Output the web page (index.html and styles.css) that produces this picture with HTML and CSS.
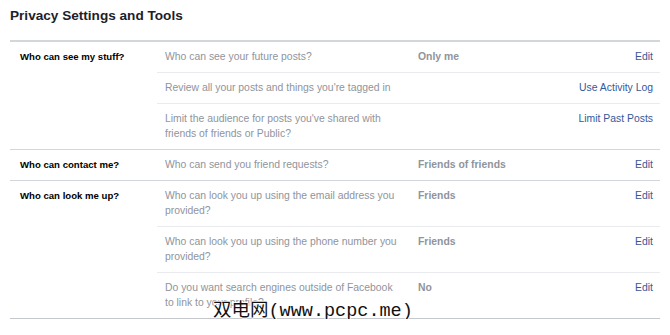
FILE: index.html
```html
<!DOCTYPE html>
<html lang="en">
<head>
    <meta charset="UTF-8">
    <meta name="viewport" content="width=device-width, initial-scale=1.0">
    <title>Privacy Settings and Tools</title>
    <link rel="stylesheet" href="styles.css">
</head>
<body>
    <div class="page">
        <h1 class="page-title">Privacy Settings and Tools</h1>
        <div class="settings">
            <div class="section first">
                <div class="section-label">Who can see my stuff?</div>
                <div class="rows">
                    <div class="row">
                        <div class="question">Who can see your future posts?</div>
                        <div class="value">Only me</div>
                        <a class="action" href="#">Edit</a>
                    </div>
                    <div class="row">
                        <div class="question">Review all your posts and things you're tagged in</div>
                        <div class="value"></div>
                        <a class="action" href="#">Use Activity Log</a>
                    </div>
                    <div class="row">
                        <div class="question">Limit the audience for posts you've shared with friends of friends or Public?</div>
                        <div class="value"></div>
                        <a class="action" href="#">Limit Past Posts</a>
                    </div>
                </div>
            </div>
            <div class="section">
                <div class="section-label">Who can contact me?</div>
                <div class="rows">
                    <div class="row">
                        <div class="question">Who can send you friend requests?</div>
                        <div class="value">Friends of friends</div>
                        <a class="action" href="#">Edit</a>
                    </div>
                </div>
            </div>
            <div class="section last">
                <div class="section-label">Who can look me up?</div>
                <div class="rows">
                    <div class="row">
                        <div class="question">Who can look you up using the email address you provided?</div>
                        <div class="value">Friends</div>
                        <a class="action" href="#">Edit</a>
                    </div>
                    <div class="row">
                        <div class="question">Who can look you up using the phone number you provided?</div>
                        <div class="value">Friends</div>
                        <a class="action" href="#">Edit</a>
                    </div>
                    <div class="row">
                        <div class="question">Do you want search engines outside of Facebook to link to your profile?</div>
                        <div class="value">No</div>
                        <a class="action" href="#">Edit</a>
                    </div>
                </div>
            </div>
        </div>
        <div class="watermark">双电网(www.pcpc.me)</div>
    </div>
</body>
</html>
```

FILE: styles.css
```css
:root {
    --text-dark: #1d2129;
    --text-grey: #90949c;
    --link: #365899;
    --line-strong: #d3d6db;
    --line-soft: #e9ebee;
}

* {
    margin: 0;
    padding: 0;
    box-sizing: border-box;
}

body {
    font-family: 'Liberation Sans', Arial, Helvetica, sans-serif;
    background: #fff;
    color: var(--text-dark);
}

.page {
    position: relative;
    padding: 8px 10px 0;
}

.page-title {
    font-size: 13.6px;
    font-weight: bold;
    line-height: 16px;
    color: var(--text-dark);
    margin-bottom: 16px;
}

/* Settings table */
.section {
    display: flex;
    border-top: 1px solid var(--line-strong);
}

.section.first {
    border-top-width: 2px;
}

.section.last {
    border-bottom: 1px solid #c4c7cc;
}

.section-label {
    width: 147px;
    flex-shrink: 0;
    padding: 7px 0 0 10px;
    font-size: 9.6px;
    font-weight: bold;
    line-height: 15px;
    color: #000;
}

.rows {
    flex: 1;
}

.row {
    display: grid;
    grid-template-columns: 232px 1fr auto;
    column-gap: 21px;
    padding: 7px 7px 8px 8px;
    font-size: 10.4px;
    line-height: 15px;
}

.row + .row {
    border-top: 1px solid var(--line-soft);
}

.question {
    color: var(--text-grey);
}

.value {
    color: var(--text-grey);
    font-weight: bold;
}

.action {
    color: var(--link);
    text-decoration: none;
    text-align: right;
}

/* Overlay watermark */
.watermark {
    position: absolute;
    left: 213px;
    top: 301px;
    font-family: 'Liberation Mono', 'Noto Sans CJK SC', monospace;
    font-size: 18.5px;
    line-height: 22px;
    color: #111;
    text-shadow: 1px 0 #fff, -1px 0 #fff, 0 1px #fff, 0 -1px #fff;
}
```
